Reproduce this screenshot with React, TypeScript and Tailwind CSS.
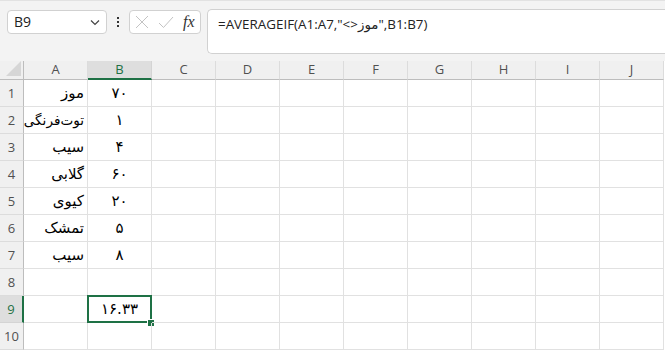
import React from "react";

const cols = ["A", "B", "C", "D", "E", "F", "G", "H", "I", "J"];
const aVals = ["موز", "توت‌فرنگی", "سیب", "گلابی", "کیوی", "تمشک", "سیب", "", "", ""];
const bVals = ["۷۰", "۱", "۴", "۶۰", "۲۰", "۵", "۸", "", "۱۶.۳۳", ""];

export default function App() {
  return (
    <div
      className="w-[665px] h-[351px] overflow-hidden bg-white relative"
      style={{ fontFamily: '"Open Sans", "Noto Sans", "DejaVu Sans", sans-serif' }}
    >
      {/* formula bar area */}
      <div className="h-[61px] bg-[#f3f3f3] border-t border-[#e2e2e2] flex items-start pt-[8px] pl-[7px]">
        <div className="mt-[1px] w-[100px] h-[24px] bg-white border border-[#d1d1d1] rounded-[4px] flex items-center justify-between pl-[6px] pr-[5px]">
          <span className="text-[14px] text-[#222] leading-none">B9</span>
          <svg width="12" height="12" viewBox="0 0 12 12">
            <path d="M2 4.5 L6 8.5 L10 4.5" fill="none" stroke="#444" strokeWidth="1.2" />
          </svg>
        </div>
        <div className="w-[22px] h-[26px] flex flex-col items-center justify-center gap-[2px]">
          <div className="w-[2px] h-[2px] bg-[#333]" />
          <div className="w-[2px] h-[2px] bg-[#333]" />
          <div className="w-[2px] h-[2px] bg-[#333]" />
        </div>
        <div className="mt-[1px] w-[72px] h-[24px] bg-white border border-[#d1d1d1] rounded-[4px] flex items-center pl-[5px] gap-[9px]">
          <svg width="14" height="14" viewBox="0 0 14 14">
            <path d="M1 1 L13 13 M13 1 L1 13" stroke="#c3c3c3" strokeWidth="1" fill="none" />
          </svg>
          <svg width="16" height="14" viewBox="0 0 16 14">
            <path d="M1 8 L5.5 12.5 L15 2" stroke="#c3c3c3" strokeWidth="1" fill="none" />
          </svg>
          <span
            className="text-[16px] italic text-[#333] leading-none"
            style={{ fontFamily: '"Liberation Serif", "DejaVu Serif", serif' }}
          >
            fx
          </span>
        </div>
        <div className="ml-[6px] flex-1 h-[45px] bg-white border border-[#d1d1d1] rounded-l-[5px] border-r-0 pl-[10px] pt-[1px]">
          <span className="text-[13.4px] text-[#222]" dir="ltr">
            =AVERAGEIF(A1:A7,"&lt;&gt;موز",B1:B7)
          </span>
        </div>
      </div>

      {/* grid */}
      <div className="grid grid-cols-[24px_repeat(10,64px)] grid-rows-[19px_repeat(10,27px)]">
        <div className="bg-[#f0f0f0] border-b border-r border-[#bdbdbd] flex items-end justify-end pr-[2px] pb-[3px]">
          <svg width="15" height="15" viewBox="0 0 15 15">
            <polygon points="0,15 15,0 15,15" fill="#d6d6d6" />
          </svg>
        </div>
        {cols.map((c) => (
          <div
            key={c}
            className={
              c === "B"
                ? "bg-[#dedede] border-r border-[#d4d4d4] border-b-2 border-b-[#1e7145] text-[#1e7145] text-[13px] flex items-center justify-center"
                : "bg-[#f0f0f0] border-r border-[#dcdcdc] border-b border-b-[#bdbdbd] text-[#505050] text-[13px] flex items-center justify-center"
            }
          >
            {c}
          </div>
        ))}
        {Array.from({ length: 10 }).map((_, r) => (
          <React.Fragment key={r}>
            <div
              className={
                r === 8
                  ? "bg-[#dedede] border-b border-[#d4d4d4] border-r-2 border-r-[#1e7145] text-[#1e7145] text-[13px] flex items-center justify-center pt-[2px]"
                  : "bg-[#f0f0f0] border-b border-[#dcdcdc] border-r border-r-[#bdbdbd] text-[#505050] text-[13px] flex items-center justify-center pt-[2px]"
              }
            >
              {r + 1}
            </div>
            {cols.map((c) => {
              const isSel = c === "B" && r === 8;
              let content: React.ReactNode = null;
              if (c === "A" && aVals[r]) {
                content = (
                  <div
                    className={
                      r === 1
                        ? "w-full h-full flex items-center justify-end pr-[3px] text-[13.6px] text-black whitespace-nowrap"
                        : "w-full h-full flex items-center justify-end pr-[3px] text-[15px] text-black whitespace-nowrap"
                    }
                  >
                    <span dir="rtl">{aVals[r]}</span>
                  </div>
                );
              }
              if (c === "B" && bVals[r]) {
                content = (
                  <div className="w-full h-full flex items-center justify-center text-[15px] text-black">
                    <span dir="rtl">{bVals[r]}</span>
                  </div>
                );
              }
              return (
                <div
                  key={c}
                  className="relative border-r border-b border-[#e1e1e1] overflow-visible"
                  style={{ fontFamily: '"DejaVu Sans", "Noto Sans", sans-serif' }}
                >
                  {content}
                  {isSel && (
                    <>
                      <div className="absolute left-[-1px] top-[-1px] right-[-1px] bottom-[-1px] border-2 border-[#1e7145]" />
                      <div className="absolute right-[-4px] bottom-[-5px] w-[8px] h-[8px] bg-[#1e7145] border border-white" />
                    </>
                  )}
                </div>
              );
            })}
          </React.Fragment>
        ))}
      </div>
    </div>
  );
}
